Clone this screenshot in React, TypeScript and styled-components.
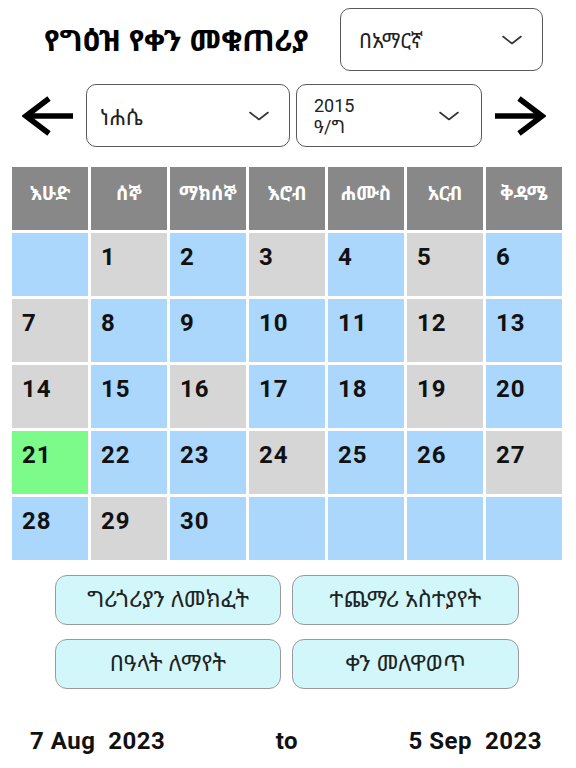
import React from 'react';
import styled, { createGlobalStyle } from 'styled-components';

const ethiopic = `"Noto Sans Ethiopic", "Abyssinica SIL", "Noto Serif Ethiopic", "DejaVu Sans", "Noto Sans", sans-serif`;

const GlobalStyle = createGlobalStyle`
  body {
    margin: 0;
    background: #ffffff;
    font-family: Roboto, "Liberation Sans", sans-serif;
    color: #111111;
  }
`;

type Tone = 'blue' | 'gray' | 'green';

const toneColors: Record<Tone, string> = {
  blue: '#abd7fc',
  gray: '#d6d6d6',
  green: '#7cfb8b',
};

const weekDays = ['እሁድ', 'ሰኞ', 'ማክሰኞ', 'እሮብ', 'ሐሙስ', 'አርብ', 'ቅዳሜ'];

const grayDays = [1, 3, 5, 7, 12, 14, 16, 19, 24, 27, 29];
const today = 21;

// one blank before the 1st, four after the 30th
const cells: { day?: number; tone: Tone }[] = [
  { tone: 'blue' },
  ...Array.from({ length: 30 }, (_, i) => {
    const day = i + 1;
    const tone: Tone = day === today ? 'green' : grayDays.includes(day) ? 'gray' : 'blue';
    return { day, tone };
  }),
  { tone: 'blue' },
  { tone: 'blue' },
  { tone: 'blue' },
  { tone: 'blue' },
];

const Chevron = () => (
  <svg width="20" height="10" viewBox="0 0 20 10" fill="none">
    <path d="M1 1.5 L10 8.5 L19 1.5" stroke="#333" strokeWidth="1.6" strokeLinecap="round" strokeLinejoin="round" />
  </svg>
);

const Arrow = ({ dir }: { dir: 'left' | 'right' }) => (
  <svg width="52" height="40" viewBox="0 0 52 40" fill="none" style={{ transform: dir === 'right' ? 'scaleX(-1)' : undefined }}>
    <path d="M4 20 H51" stroke="#000" strokeWidth="5.5" />
    <path d="M27 2.5 L4 20 L27 37.5" stroke="#000" strokeWidth="5.5" strokeLinejoin="miter" />
  </svg>
);

export default function App() {
  return (
    <Page>
      <GlobalStyle />
      <TopRow>
        <Title>የግዕዝ የቀን መቁጠሪያ</Title>
        <Select width={203} padLeft={18} padRight={20}>
          <SelectText size={21}>በአማርኛ</SelectText>
          <Chevron />
        </Select>
      </TopRow>

      <NavRow>
        <NavButton aria-label="previous month">
          <Arrow dir="left" />
        </NavButton>
        <Selects>
          <Select width={204} padLeft={13} padRight={20}>
            <SelectText size={22}>ነሐሴ</SelectText>
            <Chevron />
          </Select>
          <Select width={186} padLeft={17} padRight={22}>
            <YearText>
              <YearLine>2015</YearLine>
              <YearLine>ዓ/ግ</YearLine>
            </YearText>
            <Chevron />
          </Select>
        </Selects>
        <NavButton aria-label="next month">
          <Arrow dir="right" />
        </NavButton>
      </NavRow>

      <Calendar>
        {weekDays.map((d) => (
          <HeadCell key={d}>{d}</HeadCell>
        ))}
        {cells.map((c, i) => (
          <DayCell key={i} tone={c.tone}>
            {c.day}
          </DayCell>
        ))}
      </Calendar>

      <Actions>
        <ActionButton>ግሪጎሪያን ለመክፈት</ActionButton>
        <ActionButton>ተጨማሪ አስተያየት</ActionButton>
        <ActionButton>በዓላት ለማየት</ActionButton>
        <ActionButton>ቀን መለዋወጥ</ActionButton>
      </Actions>

      <RangeRow>
        <RangeText>7 Aug&nbsp; 2023</RangeText>
        <RangeText>to</RangeText>
        <RangeText>5 Sep&nbsp; 2023</RangeText>
      </RangeRow>
    </Page>
  );
}

const Page = styled.div`
  width: 576px;
  height: 768px;
  overflow: hidden;
`;

const TopRow = styled.div`
  display: flex;
  align-items: center;
  padding: 8px 0 0 44px;
`;

const Title = styled.h1`
  flex: 0 0 296px;
  margin: 0;
  font-family: ${ethiopic};
  font-size: 30px;
  font-weight: 700;
  color: #000;
  white-space: nowrap;
`;

const Select = styled.div<{ width: number; padLeft: number; padRight: number }>`
  box-sizing: border-box;
  width: ${(p) => p.width}px;
  height: 63px;
  display: flex;
  align-items: center;
  justify-content: space-between;
  padding: 0 ${(p) => p.padRight}px 0 ${(p) => p.padLeft}px;
  border: 1.5px solid #5a5a5a;
  border-radius: 10px;
  background: #fff;
`;

const SelectText = styled.span<{ size: number }>`
  font-family: ${ethiopic};
  font-size: ${(p) => p.size}px;
  color: #222;
`;

const YearText = styled.div`
  display: flex;
  flex-direction: column;
  font-family: Roboto, ${ethiopic};
  font-size: 18px;
  color: #222;
`;

const YearLine = styled.span`
  line-height: 21px;
`;

const NavRow = styled.div`
  display: flex;
  align-items: center;
  gap: 12px;
  margin-top: 13px;
  padding-left: 22px;
`;

const Selects = styled.div`
  display: flex;
  gap: 6px;
`;

const NavButton = styled.button`
  display: flex;
  align-items: center;
  justify-content: center;
  padding: 0;
  border: none;
  background: none;
`;

const Calendar = styled.div`
  display: grid;
  grid-template-columns: repeat(7, 76px);
  grid-auto-rows: 63px;
  gap: 3px;
  margin: 20px 0 0 12px;
`;

const HeadCell = styled.div`
  background: #888888;
  color: #fff;
  font-family: ${ethiopic};
  font-size: 19px;
  font-weight: 700;
  text-align: center;
  padding-top: 13px;
  box-sizing: border-box;
  white-space: nowrap;
`;

const DayCell = styled.div<{ tone: Tone }>`
  background: ${(p) => toneColors[p.tone]};
  box-sizing: border-box;
  padding: 10px 0 0 10px;
  font-family: Roboto, "Liberation Sans", sans-serif;
  font-size: 24px;
  font-weight: 700;
  letter-spacing: 1px;
  color: #111;
`;

const Actions = styled.div`
  display: grid;
  grid-template-columns: 226px 227px;
  grid-auto-rows: 50px;
  column-gap: 11px;
  row-gap: 14px;
  margin: 15px 0 0 55px;
`;

const ActionButton = styled.button`
  background: #d1f7fb;
  border: 1.5px solid #9a9a9a;
  border-radius: 12px;
  font-family: ${ethiopic};
  font-size: 23px;
  color: #222;
  padding: 0 0 4px;
`;

const RangeRow = styled.div`
  display: flex;
  justify-content: space-between;
  align-items: center;
  margin-top: 38px;
  padding: 0 34px 0 30px;
`;

const RangeText = styled.span`
  font-family: Roboto, "Liberation Sans", sans-serif;
  font-size: 24px;
  font-weight: 700;
  letter-spacing: 0.5px;
  white-space: nowrap;
  color: #111;
`;
